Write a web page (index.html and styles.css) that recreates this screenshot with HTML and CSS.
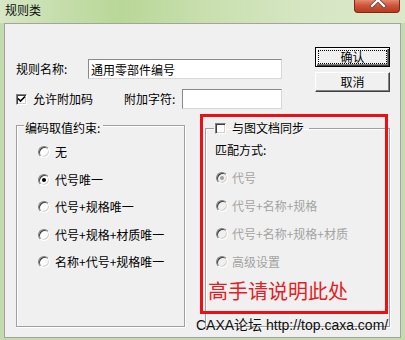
FILE: index.html
```html
<!DOCTYPE html>
<html lang="zh-CN">

<head>
	<meta charset="utf-8">
	<title>规则类</title>
	<link rel="stylesheet" href="styles.css">
</head>

<body>
	<div id="dialog">
		<div class="titlebar">
			<span class="title">规则类</span>
			<span class="close">
				<svg width="46" height="13" viewBox="0 0 46 13">
					<path d="M18 -5 L30 7 M30 -5 L18 7" stroke="#6b4a44" stroke-width="4" stroke-linecap="square" />
					<path d="M18 -5 L30 7 M30 -5 L18 7" stroke="#ffffff" stroke-width="2.2" stroke-linecap="square" />
				</svg>
			</span>
		</div>
		<div class="client">
			<div class="top">
				<div class="fields">
					<div class="row">
						<span class="lbl-name">规则名称:</span>
						<input class="edit edit-name" value="通用零部件编号">
					</div>
					<div class="row row2">
						<span class="check-item">
							<span class="chk">
								<svg width="9" height="9" viewBox="0 0 9 9">
									<path d="M1 3.5 L3.5 6 L8 1.5" fill="none" stroke="#000" stroke-width="1.6" />
								</svg>
							</span>
							允许附加码
						</span>
						<span class="lbl-suffix">附加字符:</span>
						<input class="edit edit-suffix" value="">
					</div>
				</div>
				<div class="buttons">
					<button class="button b-default">确认</button>
					<button class="button">取消</button>
				</div>
			</div>
			<div class="groups">
				<fieldset class="group g-left">
					<legend>编码取值约束:</legend>
					<div class="opts">
						<div class="opt"><span class="radio"></span>无</div>
						<div class="opt"><span class="radio on"></span>代号唯一</div>
						<div class="opt"><span class="radio"></span>代号+规格唯一</div>
						<div class="opt"><span class="radio"></span>代号+规格+材质唯一</div>
						<div class="opt"><span class="radio"></span>名称+代号+规格唯一</div>
					</div>
				</fieldset>
				<fieldset class="group g-right">
					<legend><span class="chk"></span>与图文档同步</legend>
					<div class="opts">
						<div class="caption">匹配方式:</div>
						<div class="opt disabled"><span class="radio on"></span>代号</div>
						<div class="opt disabled"><span class="radio"></span>代号+名称+规格</div>
						<div class="opt disabled"><span class="radio"></span>代号+名称+规格+材质</div>
						<div class="opt disabled"><span class="radio"></span>高级设置</div>
					</div>
				</fieldset>
			</div>
		</div>
		<!-- annotation drawn over the screenshot -->
		<div class="note"><span>高手请说明此处</span></div>
		<div class="watermark">CAXA论坛 http://top.caxa.com/</div>
	</div>
</body>

</html>
```

FILE: styles.css
```css
html,
body {
	margin: 0;
	padding: 0;
	overflow: hidden;
}

body {
	font-family: "Noto Sans CJK SC", sans-serif;
	font-size: 12px;
	color: #000;
	background: #c2daa8;
}

#dialog {
	position: relative;
	width: 405px;
	height: 340px;
	background: #c4dbab;
}

.titlebar {
	display: flex;
	align-items: flex-start;
	height: 23px;
	background: linear-gradient(90deg, #d8e7c5 0%, #c6dead 14%, #b9d797 30%, #c8dfae 50%, #d6e6c3 75%, #dbe9ca 100%);
}

.title {
	margin: 3px 0 0 5px;
	font-size: 12px;
	line-height: 14px;
	color: #111;
}

.close {
	display: block;
	margin-left: auto;
	margin-right: 5px;
	width: 46px;
	height: 13px;
	box-sizing: border-box;
	border: 1px solid #7d2a18;
	border-top: 0;
	border-radius: 0 0 4px 4px;
	background: linear-gradient(#e48a70, #d0553a 45%, #b83a20);
	overflow: hidden;
}

.close svg {
	display: block;
	margin: -1px 0 0 -1px;
}

.client {
	box-sizing: border-box;
	width: 397px;
	height: 315px;
	margin-left: 4px;
	padding: 0 10px 0 11px;
	border: 1px solid #a3a3a3;
	background: #f0f0f0;
}

.top {
	display: flex;
	height: 91px;
}

.fields {
	padding-top: 35px;
}

.row {
	display: flex;
	align-items: center;
	height: 20px;
	line-height: 14px;
}

.row2 {
	margin-top: 10px;
}

.lbl-name {
	width: 72px;
}

.check-item {
	display: flex;
	align-items: center;
	gap: 6px;
	width: 108px;
}

.lbl-suffix {
	width: 58px;
}

.edit {
	box-sizing: border-box;
	height: 20px;
	margin: 0;
	padding: 0 0 0 2px;
	border: 1px solid;
	border-color: #8a8a8a #d8d8d8 #d8d8d8 #8a8a8a;
	background: #fff;
	font-family: "Noto Sans CJK SC", sans-serif;
	font-size: 12px;
	color: #000;
	outline: none;
}

.edit-name {
	width: 194px;
}

.edit-suffix {
	width: 100px;
}

.chk {
	display: flex;
	align-items: center;
	justify-content: center;
	box-sizing: border-box;
	width: 11px;
	height: 11px;
	border: 1px solid;
	border-color: #808080 #ffffff #ffffff #808080;
	box-shadow: inset 1px 1px #404040, inset -1px -1px #d4d0c8;
	background: #fff;
}

.buttons {
	display: flex;
	flex-direction: column;
	gap: 5px;
	margin-left: auto;
	padding-top: 23px;
}

.button {
	box-sizing: border-box;
	width: 75px;
	height: 20px;
	padding: 0;
	border: 1px solid;
	border-color: #ffffff #404040 #404040 #ffffff;
	box-shadow: inset -1px -1px #808080;
	background: #f0f0f0;
	font-family: "Noto Sans CJK SC", sans-serif;
	font-size: 12px;
	line-height: 16px;
	color: #000;
}

.b-default {
	border-color: #000;
	box-shadow: inset 1px 1px #ffffff, inset -1px -1px #404040, inset -2px -2px #808080;
	outline: 1px dotted #000;
	outline-offset: -4px;
}

.groups {
	display: flex;
	gap: 20px;
	height: 212px;
}

.group {
	box-sizing: border-box;
	margin: 0;
	padding: 0;
	border: 1px solid #a0a0a0;
	box-shadow: 1px 1px 0 #ffffff, inset 1px 1px 0 #ffffff;
}

.group legend {
	line-height: 14px;
}

.g-left {
	width: 169px;
}

.g-left legend {
	margin-left: 7px;
	padding: 6px 3px 0 1px;
}

.g-right {
	width: 185px;
	margin-top: 6px;
}

.g-right legend {
	display: flex;
	align-items: center;
	gap: 6px;
	margin-left: 8px;
	padding: 0 5px 0 1px;
}

.opts {
	display: flex;
	flex-direction: column;
}

.g-left .opts {
	gap: 11.5px;
	padding: 9px 0 0 21px;
}

.g-right .opts {
	gap: 12px;
	padding: 7px 0 0 9px;
}

.caption,
.opt {
	height: 16px;
	line-height: 16px;
}

.opt {
	display: flex;
	align-items: center;
	gap: 5px;
}

.g-right .opt {
	gap: 4px;
	margin-left: 1px;
}

.radio {
	position: relative;
	box-sizing: border-box;
	width: 12px;
	height: 12px;
	border-radius: 50%;
	border: 1px solid;
	border-color: #808080 #ffffff #ffffff #808080;
	box-shadow: inset 1px 1px #404040, inset -1px -1px #d4d0c8;
	background: #fff;
}

.radio.on::after {
	content: "";
	position: absolute;
	left: 3px;
	top: 3px;
	width: 4px;
	height: 4px;
	border-radius: 50%;
	background: #000;
}

.disabled {
	color: #a3a3a3;
}

.disabled .radio {
	background: #f0f0f0;
}

.disabled .radio.on::after {
	background: #a0a0a0;
}

.note {
	position: absolute;
	left: 200px;
	top: 114px;
	box-sizing: border-box;
	width: 188px;
	height: 200px;
	display: flex;
	align-items: flex-end;
	padding: 0 0 10px 5px;
	border: 3px solid #ec1016;
	font-size: 20px;
	line-height: 20px;
	color: #e61c24;
}

.watermark {
	position: absolute;
	left: 196px;
	top: 317px;
	font-family: "Liberation Sans", "Noto Sans CJK SC", sans-serif;
	font-size: 14px;
	line-height: 17px;
	color: #111;
	white-space: nowrap;
}
```
